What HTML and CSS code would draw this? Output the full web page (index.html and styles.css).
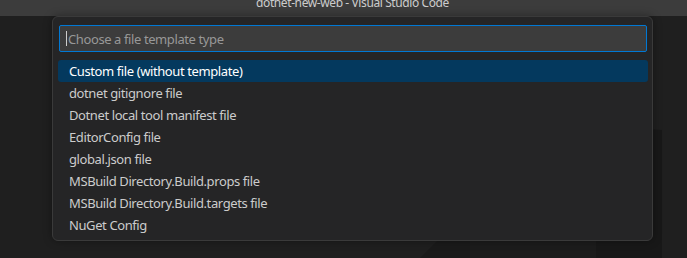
FILE: index.html
```html
<!DOCTYPE html>
<html lang="en">
<head>
  <meta charset="utf-8">
  <title>dotnet-new-web - Visual Studio Code</title>
  <link rel="stylesheet" href="styles.css">
</head>
<body>
  <header class="titlebar">
    <span class="title">dotnet-new-web - Visual Studio Code</span>
  </header>

  <main class="workbench">
    <svg class="watermark" width="687" height="242" viewBox="0 0 687 242">
      <path d="M420 242 L440 222 L470 222 L470 242 Z" fill="#1a1a1a"/>
      <path d="M470 222 L596 222 L596 242 L470 242 Z" fill="#1c1c1c"/>
      <path d="M596 110 L662 114 L662 242 L596 242 Z" fill="#181818"/>
      <path d="M455 222 L470 210 L470 222 Z" fill="#161616"/>
    </svg>

    <div class="quick-pick">
      <div class="qp-input">
        <span class="caret"></span>
        <span class="placeholder">Choose a file template type</span>
      </div>
      <ul class="qp-list">
        <li class="selected">Custom file (without template)</li>
        <li>dotnet gitignore file</li>
        <li>Dotnet local tool manifest file</li>
        <li>EditorConfig file</li>
        <li>global.json file</li>
        <li>MSBuild Directory.Build.props file</li>
        <li>MSBuild Directory.Build.targets file</li>
        <li>NuGet Config</li>
      </ul>
    </div>
  </main>
</body>
</html>
```

FILE: styles.css
```css
html, body {
  margin: 0;
  padding: 0;
}

body {
  width: 687px;
  height: 258px;
  overflow: hidden;
  background: #1f1f1f;
  font-family: "Noto Sans", "Open Sans", sans-serif;
  font-size: 13px;
  letter-spacing: -0.4px;
  color: #cccccc;
}

.titlebar {
  height: 16px;
  padding-left: 18px;
  background: #3c3c3c;
  overflow: hidden;
  text-align: center;
}

.title {
  display: block;
  margin-top: -5px;
  line-height: 16px;
  font-size: 12px;
  color: #cccccc;
}

.workbench {
  position: relative;
  height: 242px;
  padding-left: 52px;
}

.watermark {
  position: absolute;
  left: 0;
  top: 0;
}

.quick-pick {
  position: relative;
  width: 588px;
  padding: 8px 5px 4px 6px;
  background: #252526;
  border: 1px solid #3a3a3a;
  border-radius: 6px;
  box-shadow: 0 0 8px rgba(0, 0, 0, 0.36);
}

.qp-input {
  display: flex;
  align-items: center;
  height: 25px;
  padding-left: 6px;
  background: #3c3c3c;
  border: 1px solid #0078d4;
  border-radius: 2px;
}

.caret {
  width: 1px;
  height: 15px;
  margin-right: 1px;
  background: #cccccc;
}

.placeholder {
  color: #989898;
}

.qp-list {
  list-style: none;
  margin: 8px 0 0 -1px;
  padding: 0;
  width: 590px;
}

.qp-list li {
  height: 22px;
  line-height: 22px;
  padding-left: 11px;
  border-radius: 3px;
}

.qp-list li.selected {
  background: #04395e;
  color: #ffffff;
}
```
